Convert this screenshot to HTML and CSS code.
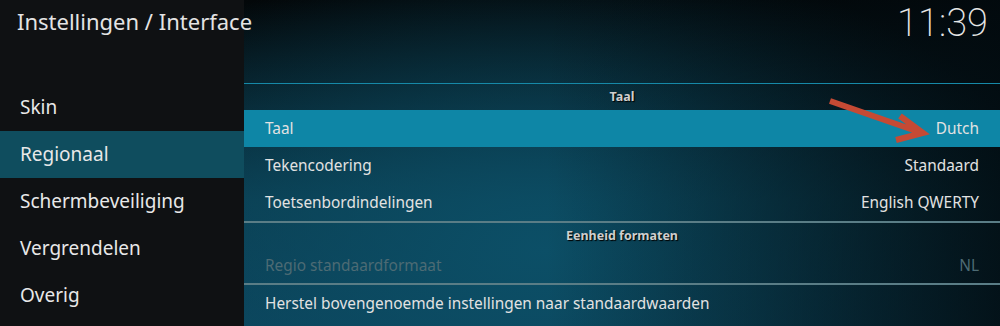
FILE: index.html
```html
<!DOCTYPE html>
<html lang="nl">

<head>
    <meta charset="UTF-8">
    <title>Instellingen / Interface</title>
    <link rel="stylesheet" href="styles.css">
</head>

<body>
    <div class="screen">
        <div class="sidebar">
            <h1 class="title">Instellingen / Interface</h1>
            <ul class="menu">
                <li>Skin</li>
                <li class="active">Regionaal</li>
                <li>Schermbeveiliging</li>
                <li>Vergrendelen</li>
                <li>Overig</li>
            </ul>
        </div>

        <div class="main">
            <div class="clock">11:39</div>
            <div class="list">
                <div class="group-title">Taal</div>
                <div class="row selected"><span>Taal</span><span>Dutch</span></div>
                <div class="row"><span>Tekencodering</span><span>Standaard</span></div>
                <div class="row"><span>Toetsenbordindelingen</span><span>English QWERTY</span></div>
                <div class="group-title sep">Eenheid formaten</div>
                <div class="row disabled"><span>Regio standaardformaat</span><span>NL</span></div>
                <div class="row sep"><span>Herstel bovengenoemde instellingen naar standaardwaarden</span></div>
            </div>

            <!-- annotation arrow pointing at the value -->
            <svg class="arrow" width="120" height="50" viewBox="0 0 120 50">
                <path d="M4 6 L96 38 M74 21 L97 38 L70 45" fill="none" stroke="#c54a34" stroke-width="6" stroke-linecap="butt" stroke-linejoin="miter"/>
            </svg>
        </div>
    </div>
</body>

</html>
```

FILE: styles.css
```css
body {
    margin: 0;
    font-family: "Noto Sans", "Open Sans", sans-serif;
    color: #e6e6e6;
    background: #0b0d0f;
}

.screen {
    display: flex;
    width: 1000px;
    height: 326px;
    overflow: hidden;
}

.sidebar {
    width: 244px;
    flex-shrink: 0;
    background: #0f1113;
}

.title {
    position: relative;
    z-index: 3;
    margin: 0;
    padding: 6px 0 0 17px;
    height: 78px;
    box-sizing: border-box;
    font-size: 22px;
    font-weight: normal;
    color: #e4e4e4;
    white-space: nowrap;
}

.menu {
    list-style: none;
    margin: 0;
    padding: 6px 0 0 0;
}

.menu li {
    height: 47px;
    line-height: 47px;
    padding-left: 20px;
    font-size: 19px;
    color: #e8e8e8;
}

.menu li.active {
    background: #0f4d5e;
}

.main {
    flex: 1;
    position: relative;
    background:
        radial-gradient(ellipse 520px 300px at 300px 250px, rgba(12, 80, 104, 0.95), rgba(12, 80, 104, 0) 100%),
        linear-gradient(180deg, #030709 0px, #061a22 80px, #0a3a4c 200px, #0b4158 326px);
}

.main::after {
    content: "";
    position: absolute;
    inset: 0;
    background: linear-gradient(90deg, rgba(0, 0, 0, 0) 40%, rgba(2, 10, 14, 0.85) 100%);
    pointer-events: none;
}

.clock {
    position: relative;
    z-index: 1;
    height: 83px;
    box-sizing: border-box;
    padding: 1px 12px 0 0;
    text-align: right;
    font-family: Roboto, "Noto Sans", sans-serif;
    font-weight: 200;
    font-size: 38px;
    color: #e6e6e6;
}

.list {
    position: relative;
    z-index: 1;
    border-top: 1px solid #1689a8;
}

.group-title {
    height: 26px;
    line-height: 26px;
    text-align: center;
    font-size: 12.5px;
    font-weight: bold;
    color: #cfcfcf;
    text-shadow: 1px 1px 1px #000;
}

.group-title.sep,
.row.sep {
    border-top: 2px solid #5a7d86;
}

.row {
    display: flex;
    justify-content: space-between;
    height: 37px;
    line-height: 37px;
    padding: 0 21px;
    font-size: 15.4px;
    color: #e2e2e2;
}

.row.selected {
    background: #0e86a6;
}

.row.disabled {
    height: 34px;
    line-height: 34px;
    color: #4d6b74;
}

.row.sep {
    height: 38px;
    line-height: 38px;
}

.arrow {
    position: absolute;
    left: 582px;
    top: 95px;
    z-index: 2;
}
```
